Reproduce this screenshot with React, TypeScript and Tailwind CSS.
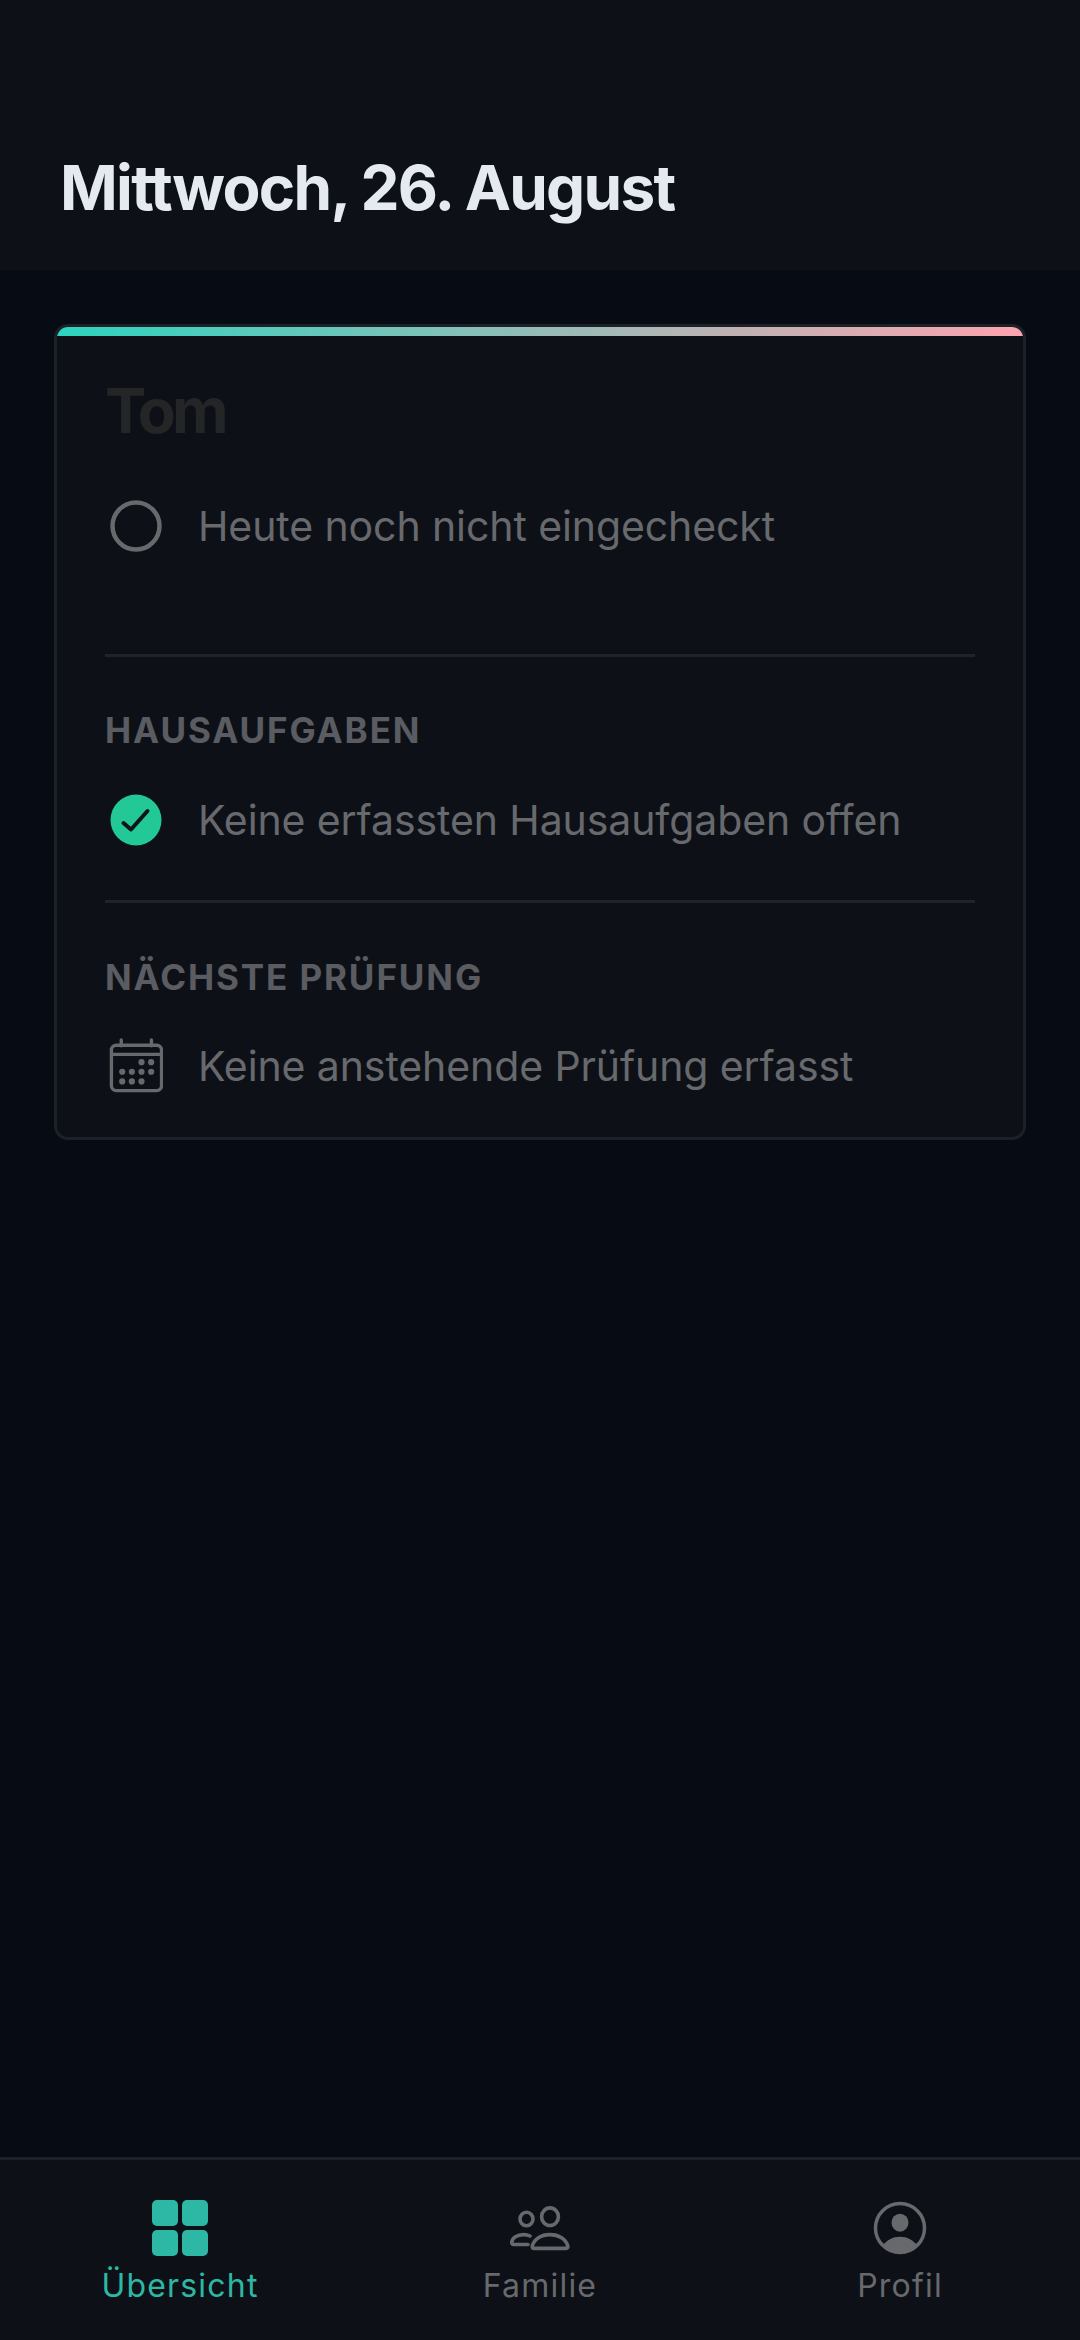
import React from 'react'

const CircleIcon = () => (
  <svg viewBox="0 0 54 54" className="w-[54px] h-[54px]">
    <circle cx="27" cy="27" r="23.5" fill="none" stroke="#67696d" strokeWidth="4.5" />
  </svg>
)

const CheckIcon = () => (
  <svg viewBox="0 0 54 54" className="w-[54px] h-[54px]">
    <circle cx="27" cy="27" r="25.5" fill="#22c997" />
    <path d="M14.5 30l7.5 6.5L38.5 18" fill="none" stroke="#111418" strokeWidth="4" strokeLinecap="round" strokeLinejoin="round" />
  </svg>
)

const CalendarIcon = () => (
  <svg viewBox="0 0 56 56" className="w-[56px] h-[56px]" fill="#67696d">
    <rect x="2.5" y="6.5" width="52" height="47" rx="5" fill="none" stroke="#67696d" strokeWidth="3.5" />
    <path d="M2.5 16h52" stroke="#67696d" strokeWidth="3.5" />
    <path d="M12.7 1v6M44 1v6" stroke="#67696d" strokeWidth="3.5" strokeLinecap="round" />
    <circle cx="33.7" cy="24" r="3.2" />
    <circle cx="43.7" cy="24" r="3.2" />
    <circle cx="13.7" cy="34" r="3.2" />
    <circle cx="23.7" cy="34" r="3.2" />
    <circle cx="33.7" cy="34" r="3.2" />
    <circle cx="43.7" cy="34" r="3.2" />
    <circle cx="13.7" cy="44" r="3.2" />
    <circle cx="23.7" cy="44" r="3.2" />
    <circle cx="33.7" cy="44" r="3.2" />
  </svg>
)

const GridIcon = () => (
  <div className="grid grid-cols-2 gap-[4px] w-[56px] h-[56px]">
    <div className="rounded-[5px] bg-[#2db8a5]" />
    <div className="rounded-[5px] bg-[#2db8a5]" />
    <div className="rounded-[5px] bg-[#2db8a5]" />
    <div className="rounded-[5px] bg-[#2db8a5]" />
  </div>
)

const FamilyIcon = () => (
  <svg viewBox="0 0 60 56" className="w-[60px] h-[56px]" fill="none" stroke="#67696d" strokeWidth="3.6">
    <ellipse cx="16.5" cy="19" rx="6.5" ry="6.8" />
    <ellipse cx="40" cy="16.7" rx="8.4" ry="8.8" />
    <path d="M20 36C18 35 15.5 34.6 13.5 34.6 7 34.6 2.5 38 1.8 42c-.2 1.5.5 2.5 2 2.5H18" strokeLinecap="round" />
    <path d="M24 48.4h32c1.5 0 2-1 1.8-2.4C56 39 49 34.6 40 34.6S24 39 22.3 46c-.2 1.4.3 2.4 1.7 2.4z" />
  </svg>
)

const ProfileIcon = () => (
  <svg viewBox="0 0 56 56" className="w-[56px] h-[56px]">
    <circle cx="28" cy="28" r="24.5" fill="none" stroke="#67696d" strokeWidth="3.5" />
    <ellipse cx="28" cy="22.7" rx="8.5" ry="9" fill="#67696d" />
    <path d="M11 45c4-5 10-8.3 17-8.3S41 40 45 45c-4 5-10 8-17 8s-13-3-17-8z" fill="#67696d" />
  </svg>
)

const StatusRow = ({ icon, text, className = '' }: { icon: React.ReactNode; text: string; className?: string }) => (
  <div className={`flex items-center gap-[35px] h-[54px] pl-[4px] ${className}`}>
    <div className="flex w-[54px] justify-center">{icon}</div>
    <span className="text-[41px] leading-[54px] tracking-[-0.1px] text-[#67696d]">{text}</span>
  </div>
)

const SectionLabel = ({ children, className = '' }: { children: React.ReactNode; className?: string }) => (
  <h4 className={`text-[35px] leading-[44px] font-bold tracking-[1.9px] text-[#5a5c61] ${className}`}>{children}</h4>
)

const NavItem = ({ icon, label, active = false }: { icon: React.ReactNode; label: string; active?: boolean }) => (
  <div className="flex flex-col items-center">
    <div className="flex h-[60px] items-center justify-center">{icon}</div>
    <span className={`mt-[6px] text-[32px] leading-[44px] tracking-[1.2px] ${active ? 'text-[#2db8a5]' : 'text-[#67696d]'}`}>
      {label}
    </span>
  </div>
)

export default function App() {
  return (
    <div className="flex h-[2340px] w-[1080px] flex-col bg-[#070b13] font-['Inter','Noto_Sans',sans-serif]">
      <header className="h-[270px] bg-[#0d1117] pl-[60px] pt-[150px]">
        <h1 className="text-[62px] leading-[76px] font-bold tracking-[-1.7px] text-[#e5e9f0]">Mittwoch, 26. August</h1>
      </header>

      <main className="flex-1 px-[54px] pt-[54px]">
        <div className="overflow-hidden rounded-[14px] border-[3px] border-[#1c2128] bg-[#0d1117]">
          <div className="h-[9px] bg-linear-to-r/srgb from-[#2dd4bf] to-[#fda4af]" />
          <div className="px-[48px] pb-[44px] pt-[39px]">
            <h3 className="text-[62px] leading-[72px] font-bold tracking-[-3.8px] text-[#232527]">Tom</h3>
            <StatusRow icon={<CircleIcon />} text="Heute noch nicht eingecheckt" className="mt-[52px]" />
            <div className="mt-[101px] h-[3px] bg-[#1f242b]" />
            <SectionLabel className="mt-[51px]">HAUSAUFGABEN</SectionLabel>
            <StatusRow icon={<CheckIcon />} text="Keine erfassten Hausaufgaben offen" className="mt-[41px]" />
            <div className="mt-[53px] h-[3px] bg-[#1f242b]" />
            <SectionLabel className="mt-[52px]">NÄCHSTE PRÜFUNG</SectionLabel>
            <StatusRow icon={<CalendarIcon />} text="Keine anstehende Prüfung erfasst" className="mt-[40px]" />
          </div>
        </div>
      </main>

      <nav className="grid h-[183px] grid-cols-3 border-t-[3px] border-[#1c2128] bg-[#0d1117] pt-[38px]">
        <NavItem icon={<GridIcon />} label="Übersicht" active />
        <NavItem icon={<FamilyIcon />} label="Familie" />
        <NavItem icon={<ProfileIcon />} label="Profil" />
      </nav>
    </div>
  )
}
